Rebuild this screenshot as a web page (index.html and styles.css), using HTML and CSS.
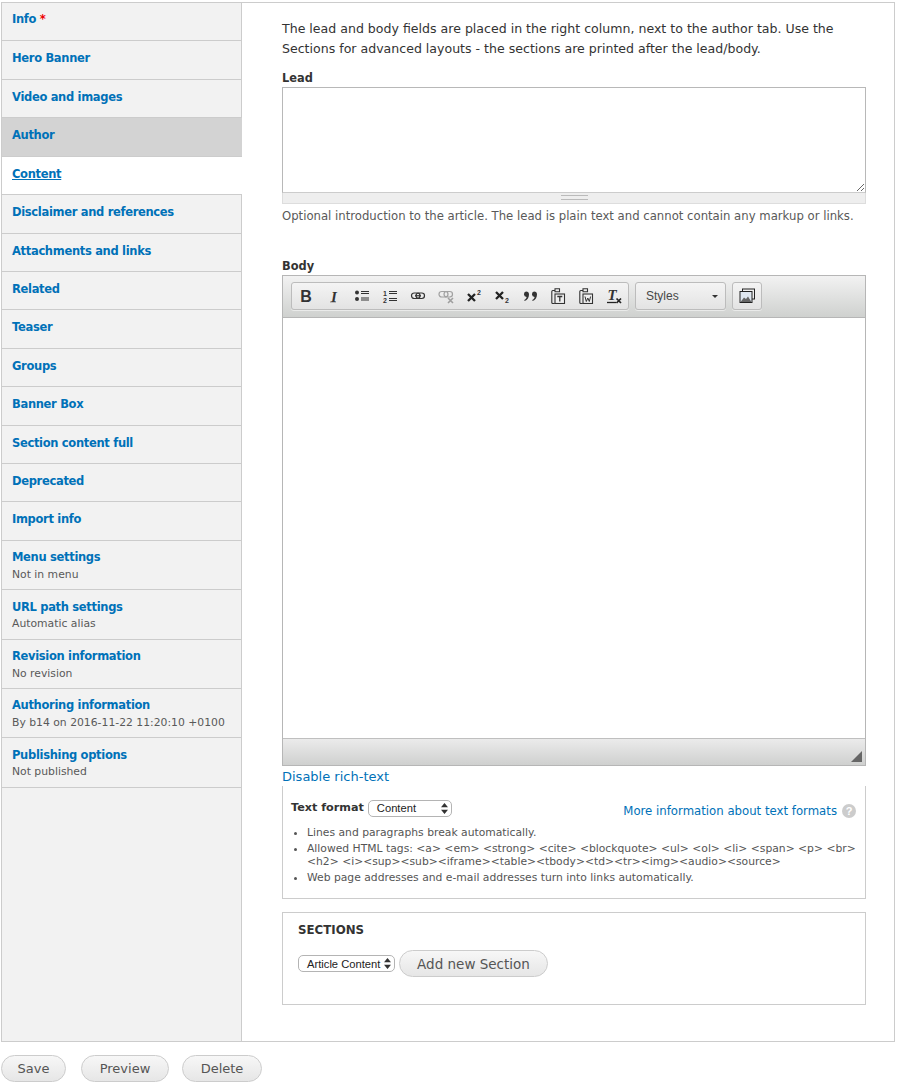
FILE: index.html
```html
<!DOCTYPE html>
<html lang="en">
<head>
<meta charset="utf-8">
<title>Edit article</title>
<link rel="stylesheet" href="styles.css">
</head>
<body>
<div class="layout">
  <nav class="tabs">
    <a class="tab tab-first"><span class="tab-title">Info <em class="req">*</em></span></a>
    <a class="tab"><span class="tab-title">Hero Banner</span></a>
    <a class="tab"><span class="tab-title">Video and images</span></a>
    <a class="tab tab-parent"><span class="tab-title">Author</span></a>
    <a class="tab tab-current"><span class="tab-title">Content</span></a>
    <a class="tab"><span class="tab-title">Disclaimer and references</span></a>
    <a class="tab"><span class="tab-title">Attachments and links</span></a>
    <a class="tab"><span class="tab-title">Related</span></a>
    <a class="tab"><span class="tab-title">Teaser</span></a>
    <a class="tab"><span class="tab-title">Groups</span></a>
    <a class="tab"><span class="tab-title">Banner Box</span></a>
    <a class="tab"><span class="tab-title">Section content full</span></a>
    <a class="tab"><span class="tab-title">Deprecated</span></a>
    <a class="tab"><span class="tab-title">Import info</span></a>
    <a class="tab tab-sum"><span class="tab-title">Menu settings</span><span class="tab-summary">Not in menu</span></a>
    <a class="tab tab-sum"><span class="tab-title">URL path settings</span><span class="tab-summary">Automatic alias</span></a>
    <a class="tab tab-sum"><span class="tab-title">Revision information</span><span class="tab-summary">No revision</span></a>
    <a class="tab tab-sum"><span class="tab-title">Authoring information</span><span class="tab-summary">By b14 on 2016-11-22 11:20:10 +0100</span></a>
    <a class="tab tab-sum"><span class="tab-title">Publishing options</span><span class="tab-summary">Not published</span></a>
  </nav>
  <main class="pane">
    <p class="intro">The lead and body fields are placed in the right column, next to the author tab. Use the Sections for advanced layouts - the sections are printed after the lead/body.</p>
    <label class="label">Lead</label>
    <textarea class="lead-input"></textarea>
    <div class="grippie"><span class="grip"></span></div>
    <p class="desc">Optional introduction to the article. The lead is plain text and cannot contain any markup or links.</p>

    <label class="label label-body">Body</label>
    <div class="editor">
      <div class="toolbar">
        <div class="tgroup">
          <span class="tbtn"><svg class="ico" viewBox="0 0 16 16"><text x="8" y="13.500" text-anchor="middle" class="g-bold">B</text></svg></span>
          <span class="tbtn"><svg class="ico" viewBox="0 0 16 16"><text x="8" y="13.500" text-anchor="middle" class="g-ital">I</text><path d="M4 14h6" stroke="#555" stroke-width=".6"/></svg></span>
          <span class="tbtn"><svg class="ico" viewBox="0 0 16 16"><circle cx="3" cy="4.500" r="2" fill="#333"/><circle cx="3" cy="11" r="2" fill="#333"/><path d="M7 3.500h8M7 5.500h8M7 10h8M7 12h8" stroke="#333" stroke-width="1.100"/></svg></span>
          <span class="tbtn"><svg class="ico" viewBox="0 0 16 16"><text x="3" y="7.500" text-anchor="middle" class="g-num">1</text><text x="3" y="14.500" text-anchor="middle" class="g-num">2</text><path d="M7 3.500h8M7 5.500h8M7 10.500h8M7 12.500h8" stroke="#333" stroke-width="1.100"/></svg></span>
          <span class="tbtn"><svg class="ico" viewBox="0 0 16 16"><rect x="1.500" y="5" width="8.500" height="5.500" rx="2.700" fill="none" stroke="#333" stroke-width="1.200"/><rect x="6" y="5" width="8.500" height="5.500" rx="2.700" fill="none" stroke="#333" stroke-width="1.200"/><path d="M5 7.750h6" stroke="#333" stroke-width="1.200"/></svg></span>
          <span class="tbtn"><svg class="ico" viewBox="0 0 16 16"><g opacity=".4"><rect x="1" y="3.500" width="9" height="5.500" rx="2.700" fill="none" stroke="#333" stroke-width="1.200"/><rect x="6" y="3.500" width="8.500" height="5.500" rx="2.700" fill="none" stroke="#333" stroke-width="1.200"/><path d="M10 10l5 5M15 10l-5 5" stroke="#333" stroke-width="1.600"/></g></svg></span>
          <span class="tbtn"><svg class="ico" viewBox="0 0 16 16"><path d="M2 6l7 7M9 6l-7 7" stroke="#222" stroke-width="2.300"/><text x="13" y="7" text-anchor="middle" class="g-num">2</text></svg></span>
          <span class="tbtn"><svg class="ico" viewBox="0 0 16 16"><path d="M2 4l7 7M9 4l-7 7" stroke="#222" stroke-width="2.300"/><text x="13" y="14.500" text-anchor="middle" class="g-num">2</text></svg></span>
          <span class="tbtn"><svg class="ico" viewBox="0 0 16 16"><path d="M4 3.500a3 3 0 0 1 3 3c0 3-1.500 5.300-4.300 6.500l-.5-.9c1.400-.8 2.200-1.800 2.400-3.100A2.800 2.800 0 0 1 4 3.500zM12 3.500a3 3 0 0 1 3 3c0 3-1.500 5.300-4.300 6.500l-.5-.9c1.400-.8 2.200-1.800 2.400-3.100a2.800 2.800 0 0 1 -.6-5.500z" fill="#333"/></svg></span>
          <span class="tbtn"><svg class="ico" viewBox="0 0 16 16"><path d="M4.500 2.500H2.800a1 1 0 0 0-1 1v11a1 1 0 0 0 1 1h2M5 .8h4.500v3H5z" fill="none" stroke="#333" stroke-width="1.100"/><rect x="5" y="6" width="9.500" height="9.500" fill="#f0f0f0" stroke="#333" stroke-width="1.100"/><path d="M7.300 8.500h5M9.800 8.500v5" stroke="#333" stroke-width="1.300"/></svg></span>
          <span class="tbtn"><svg class="ico" viewBox="0 0 16 16"><path d="M4.500 2.500H2.800a1 1 0 0 0-1 1v11a1 1 0 0 0 1 1h2M5 .8h4.500v3H5z" fill="none" stroke="#333" stroke-width="1.100"/><rect x="5" y="6" width="9.500" height="9.500" fill="#f0f0f0" stroke="#333" stroke-width="1.100"/><path d="M7 8.500l1.300 5 1.500-3.500 1.500 3.500 1.300-5" fill="none" stroke="#333" stroke-width="1"/></svg></span>
          <span class="tbtn"><svg class="ico" viewBox="0 0 16 16"><text x="6" y="11.500" text-anchor="middle" class="g-ital">T</text><path d="M1 14.500h9" stroke="#222" stroke-width="1.300"/><path d="M10.500 10.500l4.500 4.500M15 10.500L10.500 15" stroke="#222" stroke-width="1.700"/></svg></span>
        </div>
        <div class="tstyles"><span>Styles</span><i class="caret"></i></div>
        <div class="timage"><svg class="ico" viewBox="0 0 16 16"><rect x="3.500" y="1" width="12" height="10" fill="#eee" stroke="#222"/><rect x="1" y="3.500" width="12" height="11" fill="#dfe7f0" stroke="#222"/><path d="M1.500 14l3.500-4.500 2 1.500 2-2.500 3.500 5.500z" fill="#666"/></svg></div>
      </div>
      <div class="edit-area"></div>
      <div class="edit-bottom"><svg class="resizer" viewBox="0 0 11 11"><path d="M11 0v11H0z" fill="#666"/></svg></div>
    </div>
    <a class="toggle">Disable rich-text</a>

    <div class="filter">
      <div class="filter-head">
        <div class="filter-pick"><span class="filter-label">Text format</span>
          <span class="sel sel-format"><span>Content</span><svg class="updown" viewBox="0 0 7 11"><path d="M3.500 0L7 4.300H0zM3.500 11L0 6.700h7z" fill="#333"/></svg></span>
        </div>
        <div class="filter-help"><a class="filter-link">More information about text formats</a><span class="help-dot">?</span></div>
      </div>
      <ul class="tips">
        <li>Lines and paragraphs break automatically.</li>
        <li>Allowed HTML tags: &lt;a&gt; &lt;em&gt; &lt;strong&gt; &lt;cite&gt; &lt;blockquote&gt; &lt;ul&gt; &lt;ol&gt; &lt;li&gt; &lt;span&gt; &lt;p&gt; &lt;br&gt;<br>&lt;h2&gt; &lt;i&gt;&lt;sup&gt;&lt;sub&gt;&lt;iframe&gt;&lt;table&gt;&lt;tbody&gt;&lt;td&gt;&lt;tr&gt;&lt;img&gt;&lt;audio&gt;&lt;source&gt;</li>
        <li>Web page addresses and e-mail addresses turn into links automatically.</li>
      </ul>
    </div>

    <section class="sections">
      <h3 class="sections-title">SECTIONS</h3>
      <div class="sections-row">
        <span class="sel sel-section"><span>Article Content</span><svg class="updown" viewBox="0 0 7 11"><path d="M3.500 0L7 4.300H0zM3.500 11L0 6.700h7z" fill="#333"/></svg></span>
        <button class="btn btn-add" type="button">Add new Section</button>
      </div>
    </section>
  </main>
</div>
<div class="actions">
  <button class="btn btn-save" type="button">Save</button>
  <button class="btn btn-preview" type="button">Preview</button>
  <button class="btn btn-delete" type="button">Delete</button>
</div>
</body>
</html>
```
FILE: styles.css
```css
* { box-sizing: border-box; }
html, body { margin: 0; padding: 0; background: #fff; }
body {
  font-family: "DejaVu Sans", sans-serif;
  font-size: 12px;
  color: #333;
  height: 1085px;
  overflow: hidden;
}
.layout {
  display: flex;
  margin: 2px 2px 0 1px;
  height: 1040px;
  border: 1px solid #ccc;
}
.tabs {
  width: 240px;
  flex: none;
  display: flex;
  flex-direction: column;
  background: #f2f2f2;
  border-right: 1px solid #ccc;
}
.tab {
  display: block;
  height: 38.430px;
  padding: 9px 10px 0;
  border-bottom: 1px solid #ccc;
  color: #0071b8;
  margin-right: -1px;
  border-right: 1px solid #ccc;
}
.tab-first { padding-top: 8px; }
.tab-sum { height: 49.350px; padding-top: 8.500px; }
.tab-title {
  display: block;
  font-weight: bold;
  font-size: 11.500px;
  letter-spacing: -.32px;
  line-height: 17px;
}
.tab-summary {
  display: block;
  margin-top: .5px;
  font-size: 10.800px;
  line-height: 16px;
  color: #595959;
}
.req { color: #e00; font-style: normal; }
.tab-parent { background: #d3d3d3; border-right: 0; }
.tab-current { background: #fff; border-right: 0; }
.tab-current .tab-title { text-decoration: underline; }
.pane {
  flex: 1;
  min-width: 0;
  padding: 16px 28px 0 40px;
}
.intro {
  margin: 0;
  font-size: 12.570px;
  line-height: 20px;
  color: #333;
}
.label {
  display: block;
  font-weight: bold;
  font-size: 11.400px;
  line-height: 16px;
  margin-top: 11px;
}
.lead-input {
  display: block;
  width: 100%;
  height: 106px;
  margin: 1px 0 0;
  padding: 4px;
  border: 1px solid #b8b8b8;
  border-bottom-color: #ccc;
  background: #fff;
  outline: 0;
}
.grippie {
  height: 11px;
  background: #eee;
  border: 1px solid #ddd;
  border-top: 0;
  display: flex;
  justify-content: center;
  padding-top: 2px;
}
.grip {
  width: 27px;
  height: 5px;
  border-top: 1px solid #bbb;
  border-bottom: 1px solid #bbb;
}
.desc {
  margin: 4px 0 0;
  font-size: 11.680px;
  line-height: 16px;
  color: #595959;
}
.label-body { margin-top: 34px; }
.editor {
  margin-top: 1px;
  border: 1px solid #b6b6b6;
  height: 491px;
  display: flex;
  flex-direction: column;
}
.toolbar {
  height: 42px;
  flex: none;
  display: flex;
  gap: 6px;
  padding: 6px 0 0 8px;
  background: linear-gradient(#f2f2f2, #cfd1cf);
  border-bottom: 1px solid #b6b6b6;
}
.tgroup, .tstyles, .timage {
  height: 28px;
  border: 1px solid #bcbcbc;
  border-radius: 3px;
  background: linear-gradient(#f4f4f4, #e3e3e3);
  box-shadow: 0 1px 0 rgba(255, 255, 255, .5);
}
.tgroup { display: flex; width: 338px; }
.tbtn {
  width: 28px;
  height: 26px;
  display: flex;
  align-items: center;
  justify-content: center;
}
.ico { width: 16px; height: 16px; display: block; }
.g-bold { font: bold 16px "Liberation Sans", sans-serif; fill: #333; }
.g-ital { font: italic bold 15px "Liberation Serif", serif; fill: #333; }
.g-num { font: bold 7px "Liberation Sans", sans-serif; fill: #333; }
.tstyles {
  width: 91px;
  display: flex;
  align-items: center;
  justify-content: space-between;
  padding: 0 7px 0 10px;
  font: 12px "Liberation Sans", sans-serif;
  color: #484848;
}
.caret {
  width: 0;
  height: 0;
  border-left: 3px solid transparent;
  border-right: 3px solid transparent;
  border-top: 3px solid #333;
}
.timage {
  width: 30px;
  display: flex;
  align-items: center;
  justify-content: center;
}
.edit-area { flex: 1; background: #fff; }
.edit-bottom {
  height: 27px;
  flex: none;
  display: flex;
  justify-content: flex-end;
  align-items: flex-end;
  padding: 0 3px 3px 0;
  background: linear-gradient(#ebebeb, #cfd0cf);
  border-top: 1px solid #bfbfbf;
}
.resizer { width: 11px; height: 11px; display: block; }
.toggle {
  display: block;
  color: #0071b8;
  font-size: 13px;
  line-height: 19px;
  margin-top: 1px;
}
.filter {
  height: 113px;
  border: 1px solid #ccc;
  border-top: 0;
  padding: 13px 9px 0 8px;
}
.filter-head {
  display: flex;
  justify-content: space-between;
  align-items: flex-start;
}
.filter-pick { display: flex; align-items: center; gap: 4px; }
.filter-label { font-weight: bold; font-size: 11.200px; line-height: 18px; }
.filter-help { display: flex; align-items: center; gap: 5px; margin-top: 3px; }
.filter-link { color: #0071b8; font-size: 11.730px; line-height: 18px; }
.help-dot {
  width: 14px;
  height: 14px;
  border-radius: 50%;
  background: #ccc;
  color: #fff;
  font: bold 11px/14px "Liberation Sans", sans-serif;
  text-align: center;
}
.sel {
  display: inline-flex;
  align-items: center;
  justify-content: space-between;
  height: 17px;
  border: 1px solid #b4b4b4;
  border-radius: 5px;
  background: #fff;
  font: 11.200px "Liberation Sans", sans-serif;
  color: #222;
}
.sel-format { width: 84px; padding: 0 3px 0 8px; }
.sel-section { width: 97px; padding: 0 3px 0 8px; }
.updown { width: 7px; height: 11px; display: block; }
.tips {
  margin: 6px 0 0;
  padding: 0 0 0 16px;
  font-size: 10.780px;
  line-height: 13px;
  color: #555;
}
.tips li { margin-bottom: 3px; }
.sections {
  height: 93px;
  margin-top: 13px;
  border: 1px solid #ccc;
  padding: 9px 15px 0;
}
.sections-title {
  margin: 0;
  font-size: 11.800px;
  line-height: 17px;
  font-weight: bold;
  color: #333;
}
.sections-row { display: flex; align-items: center; gap: 4px; margin-top: 11px; }
.btn {
  height: 27px;
  border: 1px solid #ccc;
  border-radius: 14px;
  background: linear-gradient(#f7f7f7, #e6e6e6);
  color: #555;
  font-family: "DejaVu Sans", sans-serif;
  font-size: 13px;
  padding: 0;
}
.btn-add { width: 149px; font-size: 13.500px; }
.actions { display: flex; margin: 13px 0 0 1px; }
.btn-save { width: 65px; margin-right: 15px; }
.btn-preview { width: 88px; margin-right: 13px; }
.btn-delete { width: 80px; }
```
